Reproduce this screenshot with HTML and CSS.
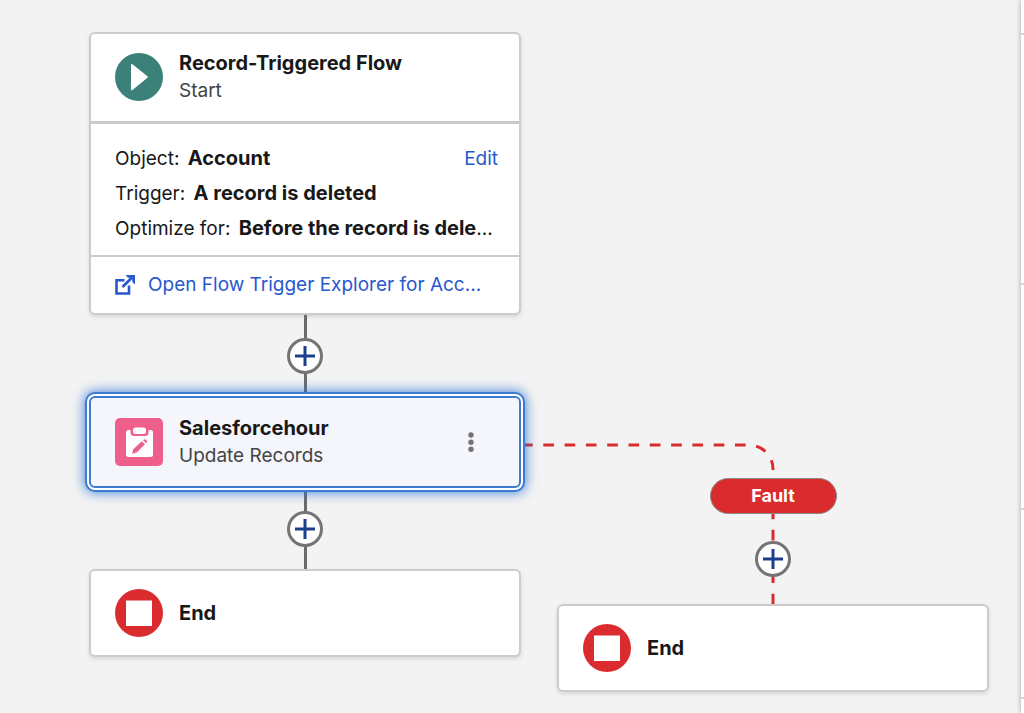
FILE: index.html
```html
<!DOCTYPE html>
<html lang="en">
<head>
    <title>Flow Builder</title>
    <meta charset="utf-8">
    <link rel="stylesheet" href="styles.css">
</head>
<body>
    <main class="canvas">
        <!-- fault path -->
        <svg class="edges" width="1000" height="713" fill="none" stroke="#da2c2e" stroke-width="3" stroke-dasharray="10.65" aria-hidden="true">
            <path d="M522 445H749A24 24 0 0 1 773 469V470"/>
            <path d="M773 508.5V604"/>
        </svg>

        <div class="flow flow-main">
            <section class="card">
                <div class="card-header card-header-start">
                    <svg class="icon" viewBox="0 0 48 48" aria-hidden="true">
                        <circle cx="24" cy="24" r="24" fill="#3b8179"/>
                        <path d="M16 12.200Q16 10.300 17.500 11.300L32.400 23.200Q33.400 24 32.400 24.800L17.500 37Q16 38 16 36.100Z" fill="#fff"/>
                    </svg>
                    <div class="card-title">
                        <h2>Record-Triggered Flow</h2>
                        <p>Start</p>
                    </div>
                </div>
                <div class="card-body">
                    <div class="row">
                        <p>Object: <b>Account</b></p>
                        <a href="#">Edit</a>
                    </div>
                    <div class="row"><p>Trigger: <b>A record is deleted</b></p></div>
                    <div class="row"><p>Optimize for: <b>Before the record is dele</b>...</p></div>
                </div>
                <div class="card-footer">
                    <a href="#">
                        <svg class="icon-small" viewBox="0 0 20 20" aria-hidden="true">
                            <path d="M9.500 5.200H1.500V18.500H14V10.500" fill="none" stroke="#2758cf" stroke-width="2.600"/>
                            <path d="M7.500 12L17 2.500" fill="none" stroke="#2758cf" stroke-width="2.600"/>
                            <path d="M10.500 0H20V9.500L17.300 7V2.700H13Z" fill="#2758cf"/>
                        </svg>
                        Open Flow Trigger Explorer for Acc...
                    </a>
                </div>
            </section>

            <div class="connector">
                <button class="add" aria-label="Add element">
                    <svg viewBox="0 0 20 20" aria-hidden="true"><path d="M10 0V20M0 10H20"/></svg>
                </button>
            </div>

            <section class="card card-selected">
                <div class="card-header">
                    <svg class="icon" viewBox="0 0 48 48" aria-hidden="true">
                        <rect width="48" height="48" rx="5" fill="#ee5f8b"/>
                        <path d="M13 12H15.500V14.500Q15.500 18 19 18H30Q33.500 18 33.500 14.500V12H35.500Q38 12 38 14.500V36.500Q38 39 35.500 39H13.500Q11 39 11 36.500V14.500Q11 12 13 12Z" fill="#fff"/>
                        <rect x="18" y="9.500" width="13" height="6.500" rx="2.500" fill="#fff"/>
                        <path d="M17 35.800L18.300 31.200L26.800 23.200L30 26.300L21.600 34.400Z" fill="#ee5f8b"/>
                        <path d="M28 22.200L28.800 21.500Q30 20.700 31.300 21.900Q32.600 23.200 31.700 24.500L31.100 25.200Z" fill="#ee5f8b"/>
                    </svg>
                    <div class="card-title">
                        <h2>Salesforcehour</h2>
                        <p>Update Records</p>
                    </div>
                    <button class="menu" aria-label="More actions">
                        <svg width="6" height="20" viewBox="0 0 6 20" fill="#747474" aria-hidden="true">
                            <circle cx="3" cy="3" r="2.700"/>
                            <circle cx="3" cy="10.200" r="2.700"/>
                            <circle cx="3" cy="17.300" r="2.700"/>
                        </svg>
                    </button>
                </div>
            </section>

            <div class="connector">
                <button class="add" aria-label="Add element">
                    <svg viewBox="0 0 20 20" aria-hidden="true"><path d="M10 0V20M0 10H20"/></svg>
                </button>
            </div>

            <section class="card">
                <div class="card-header card-header-end">
                    <svg class="icon" viewBox="0 0 48 48" aria-hidden="true">
                        <circle cx="24" cy="24" r="24" fill="#da2c2e"/>
                        <rect x="11" y="11.500" width="26" height="25.500" fill="#fff"/>
                    </svg>
                    <div class="card-title"><h2>End</h2></div>
                </div>
            </section>
        </div>

        <div class="flow flow-fault">
            <span class="badge">Fault</span>
            <button class="add" aria-label="Add element">
                <svg viewBox="0 0 20 20" aria-hidden="true"><path d="M10 0V20M0 10H20"/></svg>
            </button>
            <section class="card">
                <div class="card-header card-header-end">
                    <svg class="icon" viewBox="0 0 48 48" aria-hidden="true">
                        <circle cx="24" cy="24" r="24" fill="#da2c2e"/>
                        <rect x="11" y="11.500" width="26" height="25.500" fill="#fff"/>
                    </svg>
                    <div class="card-title"><h2>End</h2></div>
                </div>
            </section>
        </div>
    </main>

    <aside class="panel">
        <div class="panel-top"></div>
        <div class="panel-large"></div>
        <div class="panel-medium"></div>
        <div class="panel-small"></div>
    </aside>
</body>
</html>
```

FILE: styles.css
```css
*{
    box-sizing: border-box;
    margin: 0;
    padding: 0;
}
body{
    display: flex;
    min-height: 100vh;
    background-color: #f3f3f3;
    color: #181818;
    font-family: Inter, "Liberation Sans", sans-serif;
    font-size: 19px;
    line-height: 27px;
    overflow: hidden;
}
a{
    color: #2758cf;
    text-decoration: none;
}
b{
    margin-left: 3px;
    font-size: 20px;
    font-weight: 700;
}
button{
    border: 0;
    cursor: pointer;
}
.canvas{
    position: relative;
    flex: 1;
}

/* diagram nodes */
.edges{
    position: absolute;
    top: 0;
    left: 0;
}
.flow{
    position: absolute;
    display: flex;
    flex-direction: column;
    align-items: center;
    width: 432px;
}
.flow-main{
    top: 32px;
    left: 89px;
}
.flow-fault{
    top: 478px;
    left: 557px;
    gap: 27px;
}
.card{
    width: 100%;
    background-color: #ffffff;
    border: 2px solid #cccccc;
    border-radius: 6px;
    box-shadow: 0 2px 4px rgba(0, 0, 0, 0.12);
}
.card-selected{
    position: relative;
    background-color: #f4f6fb;
    border-color: #3c7bd3;
    box-shadow: 0 0 0 2px #ffffff, 0 0 0 4px #3c7bd3, 0 0 12px 5px rgba(40, 110, 215, 0.8);
}
.card-header{
    display: flex;
    align-items: center;
    gap: 16px;
    padding: 17px 24px;
}
.card-header-start{
    padding-top: 16px;
}
.card-header-end{
    padding: 18px 24px;
}
.icon{
    width: 48px;
    height: 48px;
    flex-shrink: 0;
}
.card-title{
    flex: 1;
}
.card-title h2{
    font-size: 20px;
    font-weight: 700;
}
.card-title p{
    color: #444444;
}
.card-body{
    border-top: 3px solid #c9c9c9;
    padding: 17px 21px 9px 24px;
    line-height: 35px;
}
.row{
    display: flex;
    justify-content: space-between;
    height: 35px;
    white-space: nowrap;
}
.card-footer{
    border-top: 2px solid #cccccc;
    padding: 14px 24px 15px;
    white-space: nowrap;
}
.card-footer a{
    display: flex;
    align-items: center;
    gap: 13px;
}
.icon-small{
    width: 20px;
    height: 20px;
}
.menu{
    display: flex;
    justify-content: center;
    width: 48px;
    background: none;
}

.connector{
    display: flex;
    align-items: center;
    justify-content: center;
    width: 36px;
    height: 81px;
    background: linear-gradient(#6b6b6b, #6b6b6b) center / 3px 100% no-repeat;
}
.add{
    display: flex;
    align-items: center;
    justify-content: center;
    position: relative;
    width: 36px;
    height: 36px;
    background-color: #ffffff;
    border: 3px solid #747474;
    border-radius: 50%;
}
.add svg{
    width: 20px;
    height: 20px;
    stroke: #1b3f8b;
    stroke-width: 3;
}
.badge{
    width: 127px;
    background-color: #da2c2e;
    border: 1px solid #8a8a8a;
    border-radius: 18px;
    color: #ffffff;
    font-size: 18px;
    font-weight: 700;
    line-height: 34px;
    text-align: center;
}

/* side panel */
.panel{
    position: relative;
    width: 3px;
    background-color: #ffffff;
    box-shadow: 0 0 5px rgba(0, 0, 0, 0.4);
}
.panel div{
    border-bottom: 2px solid #d4d4d4;
}
.panel-top{
    height: 35px;
}
.panel-large{
    height: 250px;
}
.panel-medium{
    height: 225px;
}
.panel-small{
    height: 189px;
}
```
